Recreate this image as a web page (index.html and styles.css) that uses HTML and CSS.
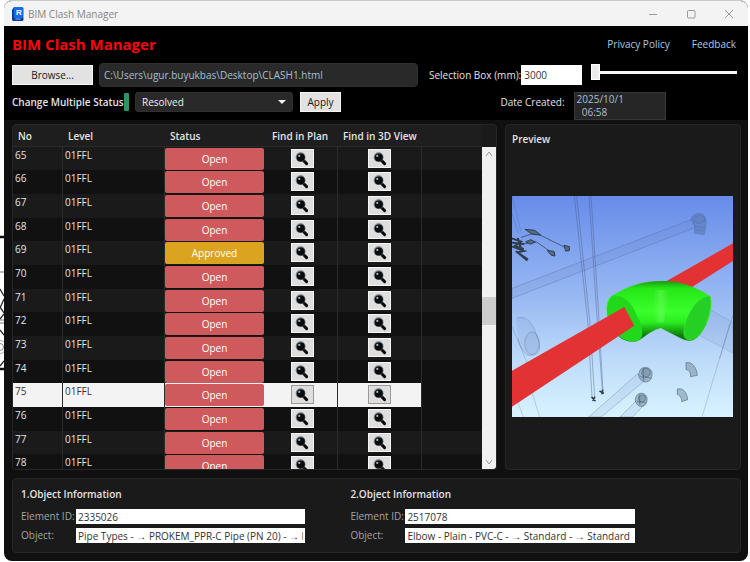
FILE: index.html
```html
<!DOCTYPE html>
<html lang="en">
<head>
<meta charset="utf-8">
<title>BIM Clash Manager</title>
<link rel="stylesheet" href="styles.css">
</head>
<body>
<svg class="sprite" aria-hidden="true">
  <symbol id="magnifier" viewBox="0 0 14 14">
    <path d="M8 8l3.6 3.6" stroke="#080808" stroke-width="3" stroke-linecap="round"/>
    <circle cx="5.6" cy="5.2" r="4.9" fill="#747b82"/>
    <circle cx="5.8" cy="5.4" r="4" fill="#080a0c"/>
    <circle cx="4.3" cy="3.9" r="1.1" fill="#a9b6c0"/>
  </symbol>
</svg>
<svg class="backdrop" viewBox="0 0 4 140" aria-hidden="true">
  <path d="M0 2h4M0 134h4" stroke="#111" stroke-width="2.400"/>
  <path d="M0 37h4M0 85h4M0 88h4" stroke="#777"/>
  <path d="M0 54l4 7M4 64l-4 9M0 72l4 6M4 79l-4 5M0 95l4 5M4 126l-4 5" stroke="#222" stroke-width="1.300"/>
  <circle cx="0" cy="112" r="3.500" fill="none" stroke="#888"/>
  <circle cx="0" cy="112" r="6.500" fill="none" stroke="#aaa"/>
</svg>
<div class="window">
  <header class="titlebar">
    <svg class="app-icon" viewBox="0 0 12 14" aria-hidden="true">
      <path d="M2 0h8a1.500 1.500 0 0 1 1.500 1.500V11H2z" fill="#1769ea"/>
      <path d="M0 3l2-3v11h9.500v1.500A1.500 1.500 0 0 1 10 14H1.500A1.500 1.500 0 0 1 0 12.500z" fill="#0a3f9c"/>
      <text x="4" y="8" class="app-letter">R</text>
      <path d="M3.500 12h5" stroke="#8fb7f5"/>
    </svg>
    <span class="window-title">BIM Clash Manager</span>
    <button class="caption" aria-label="Minimize"><svg viewBox="0 0 10 10"><path d="M1 5.500h8"/></svg></button>
    <button class="caption" aria-label="Maximize"><svg viewBox="0 0 10 10"><rect x="1.500" y="1.500" width="7.500" height="7.500" rx="1"/></svg></button>
    <button class="caption" aria-label="Close"><svg viewBox="0 0 10 10"><path d="M1 1l8 8M9 1l-8 8"/></svg></button>
  </header>

  <section class="top">
    <div class="heading">
      <h1>BIM Clash Manager</h1>
      <nav><a href="#privacy">Privacy Policy</a><a href="#feedback">Feedback</a></nav>
    </div>
    <div class="tools">
      <div class="line">
        <button class="btn browse">Browse...</button>
        <input class="path" aria-label="Clash report" value="C:\Users\ugur.buyukbas\Desktop\CLASH1.html">
      </div>
      <div class="line">
        <label for="size">Selection Box (mm):</label>
        <input id="size" class="size" value="3000">
        <input class="slider" type="range" min="0" max="100" value="0" aria-label="Selection box size">
      </div>
      <div class="line status-line">
        <label class="strong" for="status">Change Multiple Status</label>
        <span class="swatch"></span>
        <div class="picker"><select id="status"><option>Resolved</option><option>Open</option><option>Approved</option></select></div>
        <button class="btn apply">Apply</button>
      </div>
      <div class="line created">
        <label for="date">Date Created:</label>
        <textarea id="date" readonly rows="2">2025/10/1
  06:58</textarea>
      </div>
    </div>
  </section>

  <main class="main">
    <section class="card list">
      <div class="table-wrap">
        <table>
          <colgroup><col class="c-no"><col class="c-level"><col class="c-status"><col class="c-plan"><col class="c-view"><col></colgroup>
          <thead><tr><th>No</th><th>Level</th><th>Status</th><th>Find in Plan</th><th>Find in 3D View</th><th></th></tr></thead>
          <tbody id="rows"></tbody>
        </table>
      </div>
      <div class="scrollbar" aria-hidden="true">
        <svg viewBox="0 0 14 14"><path d="M4 9l3-4 3 4"/></svg>
        <span class="before"></span><span class="thumb"></span><span class="after"></span>
        <svg viewBox="0 0 14 14"><path d="M4 5l3 4 3-4"/></svg>
      </div>
    </section>

    <section class="card preview">
      <h2>Preview</h2>
      <div class="stage">
        <svg class="scene" viewBox="36 48 663 663" role="img" aria-label="Red pipe crossing a green elbow">
          <defs>
            <linearGradient id="sky" x1="0" y1="0" x2="0" y2="1">
              <stop offset="0" stop-color="#678ce9"/><stop offset=".45" stop-color="#98b8f3"/><stop offset=".75" stop-color="#bedcfa"/><stop offset="1" stop-color="#d8f3ff"/>
            </linearGradient>
            <linearGradient id="elbow" x1="0" y1="0" x2="0" y2="1">
              <stop offset="0" stop-color="#1a9a10"/><stop offset=".12" stop-color="#25e616"/><stop offset=".5" stop-color="#3aff2c"/><stop offset=".68" stop-color="#2bee20"/><stop offset=".9" stop-color="#0c7d08"/>
            </linearGradient>
            <linearGradient id="shine" x1="0" y1="0" x2="1" y2="0">
              <stop offset="0" stop-color="#8cff7c" stop-opacity="0"/><stop offset=".5" stop-color="#8cff7c" stop-opacity=".35"/><stop offset="1" stop-color="#8cff7c" stop-opacity="0"/>
            </linearGradient>
          </defs>
          <rect x="36" y="48" width="663" height="663" fill="url(#sky)"/>
          <g fill="#5068a0" fill-opacity=".09" stroke="#4d6291" stroke-opacity=".45" stroke-width="2">
            <path d="M36 325L575 118l12 24L36 355z"/>
            <path d="M572 118c5-14 18-20 28-18 16 3 20 18 18 34l-5 30-30-4 2-22z" fill-opacity=".4"/>
            <ellipse cx="598" cy="118" rx="16" ry="12"/><path d="M584 140l32 2M582 150l32 3"/>
            <path d="M50 415c25-10 45 10 58 45s20 60-12 66c-20 4-35-22-42-50"/>
            <ellipse cx="96" cy="490" rx="22" ry="34"/>
            <path d="M625 385l74 42v92l-105-55z" stroke-opacity=".25"/>
            <path d="M266 711L412 582l24 18-132 111zM360 711l50-50 20 16-32 34z"/>
          </g>
          <g fill="none" stroke="#43577f" stroke-opacity=".6" stroke-width="2">
            <path d="M223 48l41 385 12 220M230 48l40 385 14 220M267 48l25 375 15 210M273 48l22 340 14 245"/>
            <path d="M36 48l28 110M36 100l20 60M36 620l34 91M94 630l25 81M36 440l46 110" stroke-opacity=".35"/>
            <path d="M690 430L606 711M699 405l-40 130" stroke-opacity=".35"/>
          </g>
          <g fill="none" stroke="#303d4e" stroke-linecap="round">
            <path d="M64 172l42-14 50 25 45 22M70 192l40-6 46 32" stroke-width="3" stroke-opacity=".7"/>
            <path d="M76 148l28 3 18 14-24-2zM78 185l14-6 14 7-14 6zM193 196l15 4v12l-10 1zM143 212l19 2 3 14-10-2z" fill="#566b84" stroke-width="3"/>
            <path d="M38 176l25 9-18 13 24 8M38 200l34 13-20 4 30 20M50 215l30 25M54 176l8 26M38 188l32 4" stroke-width="6"/>
            <path d="M276 652l9 10M284 652l-5 9M300 634l10 5M308 631l-2 10" stroke-width="5"/>
          </g>
          <g fill="#70879b" fill-opacity=".5" stroke="#47596a" stroke-opacity=".8" stroke-width="2">
            <path d="M420 570c8-12 30-10 35 5 4 13-2 28-15 31-13 2-25-11-24-24z"/><circle cx="438" cy="578" r="13"/><path d="M422 590l32 4M430 564v38"/>
            <path d="M409 648c7-12 26-11 31 2 4 12-1 26-13 29-12 2-22-10-21-22z"/><circle cx="426" cy="655" r="11"/><path d="M411 665l28 4M419 644v31"/>
            <path d="M558 548c18-4 33 16 34 38l-20 4c1-12-5-20-14-22z"/>
            <path d="M532 627c17-5 30 12 31 32l-18 6c1-11-5-19-13-22z"/>
          </g>
          <path d="M699 190v53L570 325l-70-22z" fill="#e33234"/>
          <path d="M336 347C400 308 452 299 515 304C557 309 594 326 628 347C640 371 631 430 598 465C584 484 566 486 548 478L482 444C458 450 440 466 415 482C400 487 380 485 365 476C335 455 315 410 320 375C322 360 328 352 336 347Z" fill="url(#elbow)"/>
          <path d="M462 330h46l-15 95-20 3-15-12z" fill="url(#shine)"/>
          <path d="M336 347C364 344 390 360 406 396C422 431 440 465 415 482C395 489 372 482 356 468C326 437 306 385 336 347Z" fill="#21d81b"/>
          <path d="M630 348C640 372 625 430 602 460C586 484 560 486 553 469C546 445 565 396 586 372C600 356 618 347 630 348Z" fill="#25cf24" stroke="#36ec2d" stroke-width="2"/>
          <path d="M36 572L373 381l30 56L36 680z" fill="#e33234"/>
        </svg>
      </div>
    </section>
  </main>

  <section class="card info">
    <fieldset>
      <legend>1.Object Information</legend>
      <label for="id1">Element ID:</label><input id="id1" value="2335026">
      <label for="obj1">Object:</label><input id="obj1" value="Pipe Types - → PROKEM_PPR-C Pipe (PN 20) - → PROKEM">
    </fieldset>
    <fieldset>
      <legend>2.Object Information</legend>
      <label for="id2">Element ID:</label><input id="id2" value="2517078">
      <label for="obj2">Object:</label><input id="obj2" value="Elbow - Plain - PVC-C - → Standard - → Standard - →">
    </fieldset>
  </section>
</div>
<script src="app.js"></script>
</body>
</html>
```
FILE: styles.css
```css
* { box-sizing: border-box; }

body {
  margin: 0;
  background: #fff;
  color: #e4e4e4;
  font: 10px/14px "Open Sans", "Noto Sans", sans-serif;
}

button, input, select, textarea { font: inherit; border-radius: 0; margin: 0; }
h1, h2 { margin: 0; }
label { white-space: nowrap; }
.sprite { position: absolute; width: 0; height: 0; }
.backdrop { position: absolute; left: 0; top: 235px; width: 4px; height: 140px; }

.window {
  display: flex;
  flex-direction: column;
  height: calc(100vh - 1px);
  margin: 0 2px 1px 4px;
  background: #101010;
  border-top: 1px solid #c9c9c9;
  border-radius: 8px;
  overflow: hidden;
}

/* Title bar */
.titlebar {
  display: flex;
  align-items: center;
  flex: none;
  height: 25px;
  padding-left: 8px;
  background: #f3f3f3;
  color: #858585;
}
.app-icon { width: 12px; height: 14px; margin-right: 4px; }
.app-letter { font: bold 8px "Liberation Sans", sans-serif; fill: #fff; }
.window-title { flex: 1; }
.caption { width: 38px; height: 24px; padding: 0; border: 0; background: none; }
.caption svg { display: block; width: 10px; height: 10px; margin: auto; fill: none; stroke: #999; }

/* Header controls */
.top { flex: none; background: #000; padding: 4px 8px 0; }
.heading { display: flex; justify-content: space-between; align-items: center; height: 28px; }
h1 { color: #fb0509; font-size: 15px; line-height: 20px; font-weight: 700; }
nav { display: flex; gap: 22px; padding-right: 4px; }
a { color: #a9cbe4; text-decoration: none; }
.tools {
  display: grid;
  grid-template-columns: 1fr 308px;
  grid-template-rows: 24px 28px;
  gap: 5px 11px;
  padding: 5px 3px 0 0;
}
.line { display: flex; align-items: center; min-width: 0; }
.status-line { align-items: flex-start; }
.btn {
  height: 20px;
  padding: 0;
  border: 1px solid #f4f4f4;
  background: #e2e2e2;
  color: #161616;
  line-height: 16px;
}
.browse { flex: none; width: 81px; margin-right: 6px; }
.apply { flex: none; width: 41px; margin: 0 77px 0 7px; }
.path {
  flex: 1;
  min-width: 0;
  height: 24px;
  padding: 0 4px;
  border: 1px solid #303030;
  border-radius: 4px;
  background: #292929;
  color: #a3c0d2;
}
.size { flex: none; width: 61px; height: 20px; margin: 0 9px 0 auto; padding: 0 2px; border: 1px solid #fff; background: #fff; color: #333; }
.slider { flex: none; appearance: none; width: 146px; height: 16px; margin-bottom: 6px; background: linear-gradient(#f5f5f5, #f5f5f5) center / 100% 3px no-repeat; }
.slider::-webkit-slider-thumb { appearance: none; width: 9px; height: 16px; border: 1px solid #fff; background: #ececec; }
.strong { font-weight: 600; line-height: 20px; }
.swatch { flex: none; width: 5px; height: 18px; margin: 1px 6px 0 auto; border-radius: 1px; background: #2f9365; }
.picker { position: relative; flex: none; width: 158px; }
.picker::after {
  content: "";
  position: absolute;
  right: 7px;
  top: 8px;
  border: 4px solid transparent;
  border-top-color: #f0f0f0;
  border-bottom: 0;
}
select { appearance: none; display: block; width: 100%; height: 20px; padding: 0 6px; border: 1px solid #303030; background: #292929; color: #f0f0f0; }
.picker select { border-radius: 3px; }
.created { justify-content: center; align-items: flex-start; gap: 9px; }
.created label { line-height: 20px; }
textarea {
  width: 92px;
  height: 28px;
  padding: 0 2px;
  border: 1px solid #383838;
  background: #262626;
  color: #a3c0d2;
  line-height: 13px;
  resize: none;
  overflow: hidden;
}

/* Clash table and preview */
.main {
  flex: 1;
  min-height: 0;
  display: grid;
  grid-template-columns: 485fr 236fr;
  grid-template-rows: 100%;
  gap: 8px;
  padding: 4px 7px 8px 8px;
}
.card { background: #1a1a1a; border: 1px solid #272727; border-radius: 4px; min-width: 0; min-height: 0; overflow: hidden; }
.list { display: flex; }
.table-wrap { flex: 1; min-width: 0; overflow: hidden; }
table { width: 100%; table-layout: fixed; border-collapse: separate; border-spacing: 0; }
.c-no { width: 50px; }
.c-level { width: 102px; }
.c-status { width: 102px; }
.c-plan { width: 71px; }
.c-view { width: 84px; }
th { height: 22px; padding: 0 5px; text-align: left; font-weight: 600; white-space: nowrap; background: #1e1e1e; border-bottom: 1px solid #2a2a2a; }
td { height: 24px; padding: 1px 2px 0; vertical-align: top; border-right: 1px solid #2b2b2b; }
tr:nth-child(3n + 1) td { height: 23px; }
td:nth-child(3) { padding-left: 0; }
td:nth-child(3), td:nth-child(6) { border-right-color: transparent; }
tbody tr { background: #1a1a1a; }
tbody tr:nth-child(even) { background: #111; }
.selected td:not(:last-child) { background: #f3f3f3; color: #333; }
.selected td:last-child { background: #111; }
.state, .find { display: block; padding: 0; }
.state { width: 99px; height: 22px; border: 0; border-radius: 2px; background: #cf5a5d; color: #fff; }
.approved { background: #daa421; }
.find { width: 23px; height: 19px; margin: 1px auto 0; border: 1px solid #f6f6f6; background: #dedede; }
.selected .find { border-color: #999; }
.find svg { display: block; width: 14px; height: 14px; margin: auto; }

.scrollbar { display: flex; flex-direction: column; width: 14px; margin-top: 22px; background: #f0f0f0; }
.scrollbar svg { flex: none; width: 14px; height: 14px; fill: none; stroke: #999; }
.before { flex: 137; }
.thumb { flex: 28; background: #cdcdcd; }
.after { flex: 131; }

.preview { display: flex; flex-direction: column; padding: 7px 7px 3px 6px; }
h2 { font-size: 10px; line-height: 14px; font-weight: 600; }
.stage { flex: 1; min-height: 0; display: flex; align-items: center; justify-content: center; }
.scene { width: 100%; max-height: 100%; }

/* Object information */
.info {
  flex: none;
  display: grid;
  grid-template-columns: 40% 40%;
  gap: 45px;
  margin: 0 7px 8px 8px;
  padding: 8px 8px 9px;
}
fieldset { display: grid; grid-template-columns: 55px 1fr; gap: 4px 0; min-width: 0; margin: 0; padding: 0; border: 0; }
legend { padding: 0 0 8px; font-weight: 600; }
fieldset label { color: #a4a4a4; line-height: 15px; }
fieldset input { width: 100%; min-width: 0; height: 15px; padding: 0 2px; border: 0; background: #fff; color: #333; }
```
FILE: app.js
```js
const body = document.getElementById("rows");
const icon = '<svg aria-hidden="true"><use href="#magnifier"/></svg>';
for (let no = 65; no <= 78; no++) {
  const status = no === 69 ? "Approved" : "Open";
  const row = document.createElement("tr");
  if (no === 75) row.className = "selected";
  row.innerHTML =
    `<td>${no}</td><td>01FFL</td>` +
    `<td><button class="state ${status.toLowerCase()}">${status}</button></td>` +
    `<td><button class="find" aria-label="Find ${no} in plan">${icon}</button></td>` +
    `<td><button class="find" aria-label="Find ${no} in 3D view">${icon}</button></td><td></td>`;
  body.append(row);
}
```
